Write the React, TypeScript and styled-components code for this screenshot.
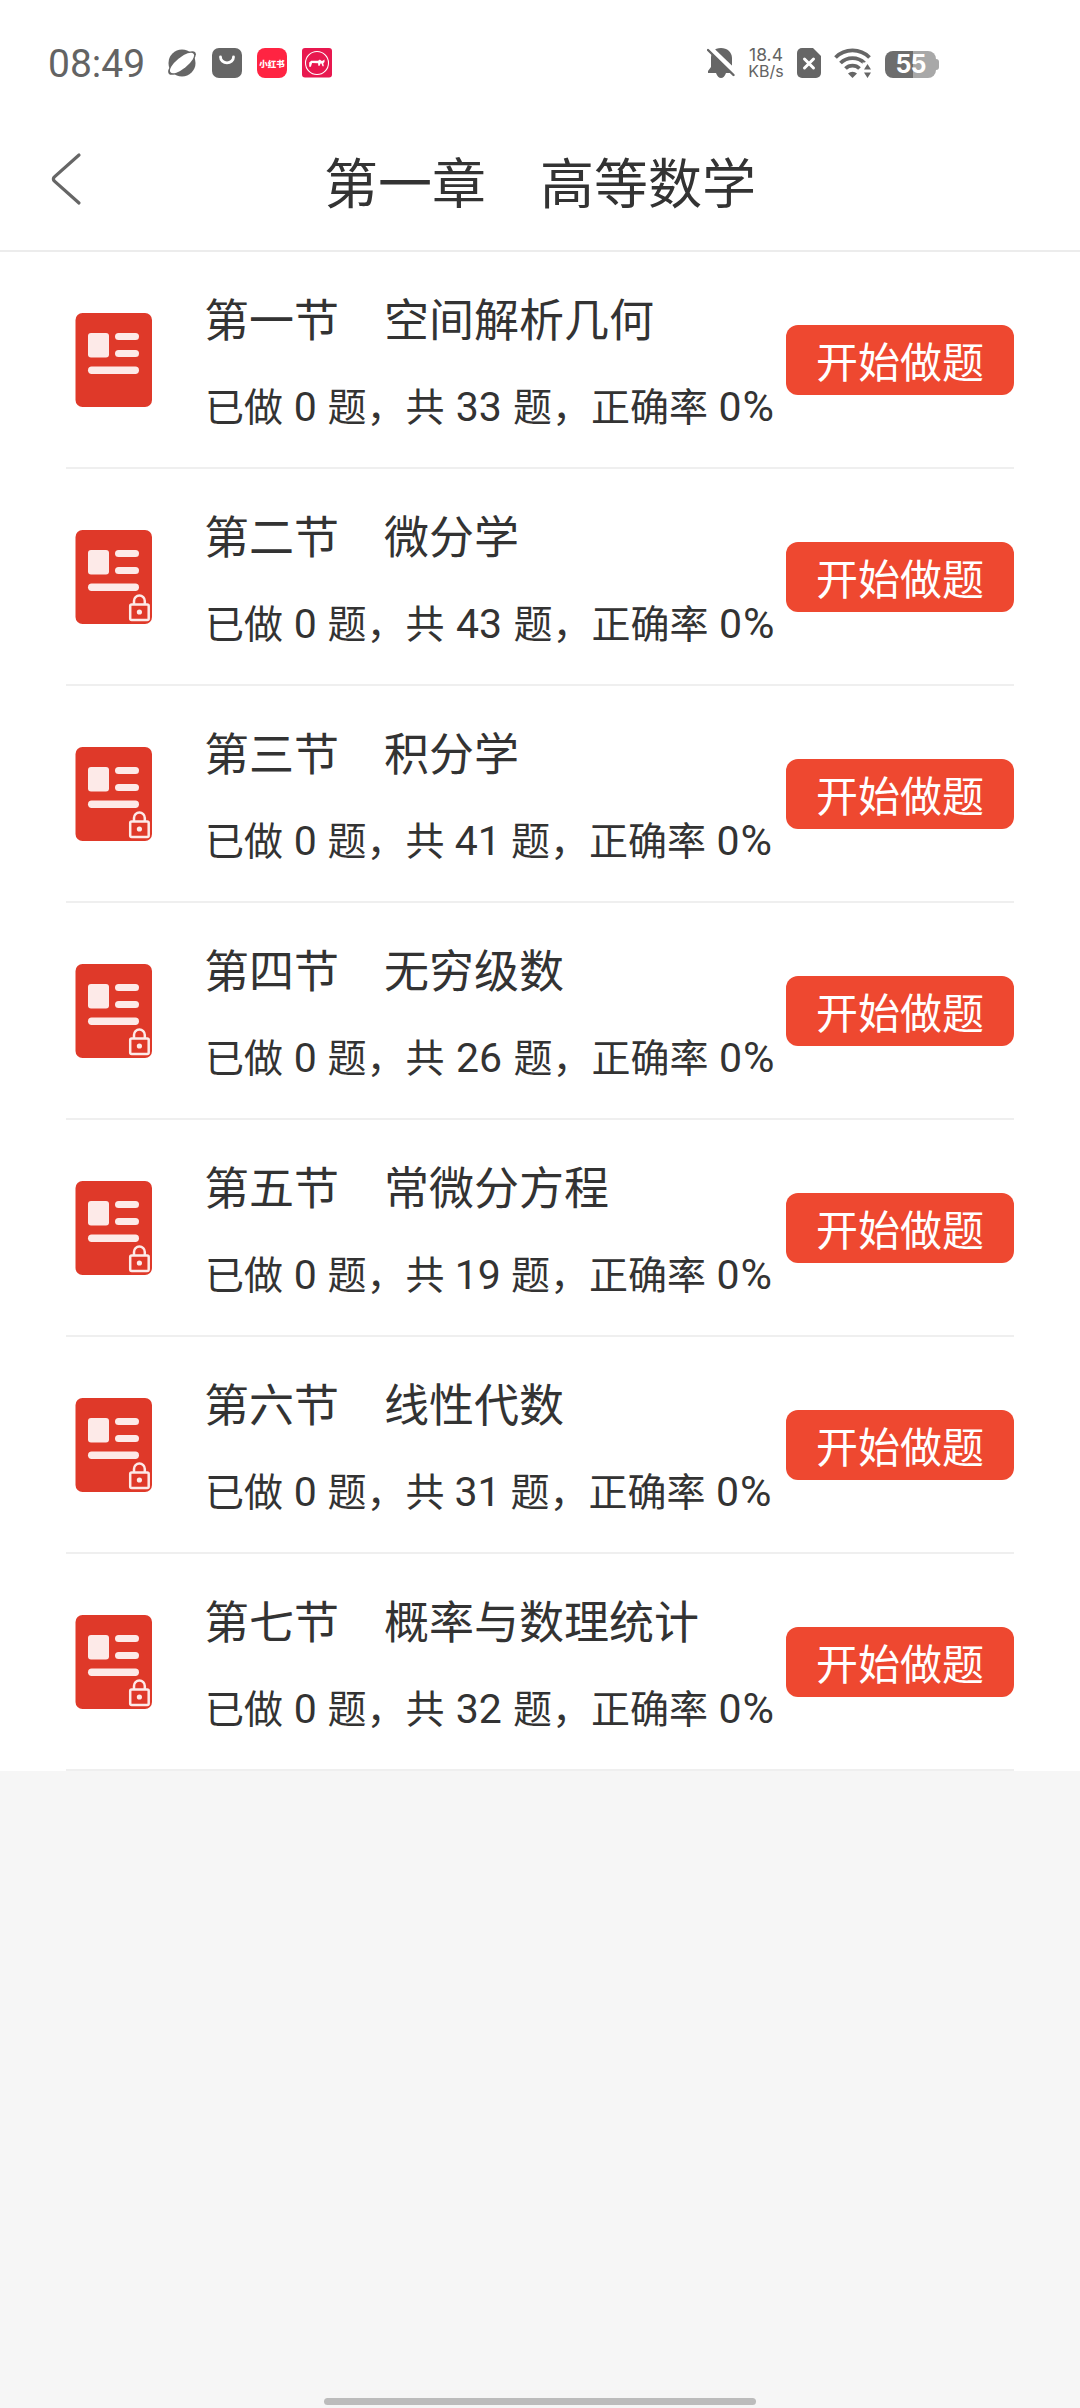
import React from "react";
import styled, { createGlobalStyle } from "styled-components";

const Global = createGlobalStyle`
  * { box-sizing: border-box; }
  body { margin: 0; background: #f6f6f6; font-family: "Noto Sans CJK SC", "Noto Sans", sans-serif; color: #333; }
`;

const Screen = styled.div`
  display: flex;
  flex-direction: column;
  height: 2408px;
  width: 1080px;
  background: #f6f6f6;
`;

const StatusBar = styled.div`
  display: flex;
  justify-content: space-between;
  align-items: center;
  height: 126px;
  padding: 0 141px 0 48px;
  background: #fff;
  color: #636363;
`;

const StatusGroup = styled.div<{ $gap: number }>`
  display: flex;
  align-items: center;
  gap: ${(p) => p.$gap}px;
`;

const Clock = styled.span`
  width: 104px;
  padding-top: 2px;
  font: 400 39px/46px Roboto, sans-serif;
  white-space: nowrap;
`;

const NetSpeed = styled.span`
  display: flex;
  flex-direction: column;
  align-items: center;
  width: 36px;
  font: 400 17.5px/16px Inter, sans-serif;
  white-space: nowrap;
`;

const NetUnit = styled.span`
  font-size: 16px;
`;

const RedApp = styled.span`
  display: flex;
  align-items: center;
  justify-content: center;
  width: 30px;
  height: 30px;
  border-radius: 8px;
  background: #ff2442;
  color: #fff;
  font: 900 8.5px/10px "Noto Sans CJK SC", sans-serif;
  white-space: nowrap;
`;

const Battery = styled.span`
  display: flex;
  align-items: center;
  margin-top: 3px;
`;

const BatteryBody = styled.span`
  display: flex;
  align-items: center;
  justify-content: center;
  width: 51px;
  height: 27px;
  border-radius: 8px;
  background: linear-gradient(90deg, #6d6d6d 55%, #a8a8a8 55%);
  color: #fff;
  font: 700 25px/27px Inter, sans-serif;
  letter-spacing: -1px;
`;

const BatteryTip = styled.span`
  width: 3px;
  height: 11px;
  border-radius: 0 3px 3px 0;
  background: #a8a8a8;
`;

const Header = styled.header`
  display: grid;
  grid-template-columns: 120px 1fr 120px;
  align-items: center;
  height: 126px;
  background: #fff;
  border-bottom: 2px solid #ececec;
`;

const BackButton = styled.button`
  display: flex;
  padding: 0 0 18px 50px;
  border: 0;
  background: none;
`;

const Title = styled.h1`
  margin: 0;
  padding-bottom: 14px;
  text-align: center;
  font-size: 54px;
  line-height: 76px;
  font-weight: 400;
  white-space: nowrap;
`;

const List = styled.main`
  padding: 0 66px;
  background: #fff;
`;

const Row = styled.section`
  display: flex;
  align-items: center;
  height: 217px;
  border-bottom: 2px solid #efefef;
`;

const BookSlot = styled.div`
  display: flex;
  width: 138px;
  padding-left: 9px;
`;

const Info = styled.div`
  display: flex;
  flex-direction: column;
  gap: 26px;
  width: 582px;
  padding-top: 5px;
`;

const SectionName = styled.h2`
  margin: 0;
  font-size: 45px;
  line-height: 60px;
  font-weight: 400;
  white-space: nowrap;
`;

const Stats = styled.p`
  display: flex;
  align-items: baseline;
  margin: 0;
  padding-left: 1px;
  font-size: 39px;
  line-height: 60px;
  white-space: nowrap;
`;

const Count = styled.span<{ $width: number }>`
  width: ${(p) => p.$width}px;
  text-align: center;
  font-family: Roboto, sans-serif;
  font-size: 41px;
`;

const Percent = styled.span`
  padding-left: 10.5px;
  font-family: Roboto, sans-serif;
  font-size: 41px;
  letter-spacing: 1px;
`;

const PercentSign = styled.span`
  font-size: 43px;
  line-height: 1;
`;

const StartButton = styled.button`
  width: 228px;
  height: 70px;
  padding: 1px 0 0;
  border: 0;
  border-radius: 12px;
  background: #ee4830;
  color: #fff;
  font: 400 42px/68px "Noto Sans CJK SC", sans-serif;
  white-space: nowrap;
`;

const Bottom = styled.footer`
  display: flex;
  flex: 1;
  align-items: flex-end;
  justify-content: center;
  padding-bottom: 3px;
`;

const HomeBar = styled.div`
  width: 432px;
  height: 7px;
  border-radius: 4px;
  background: #bcbcbc;
`;

const PlanetIcon = () => (
  <svg width="30" height="30" viewBox="0 0 30 30">
    <circle cx="15" cy="15" r="13.5" fill="#666" />
    <ellipse cx="15" cy="15" rx="17" ry="6.5" transform="rotate(-39 15 15)" fill="#666" />
    <ellipse cx="15" cy="15" rx="14.8" ry="5.6" transform="rotate(-39 15 15)" fill="#fff" />
  </svg>
);

const BagIcon = () => (
  <svg width="30" height="30" viewBox="0 0 30 30">
    <rect width="30" height="30" rx="7" fill="#666" />
    <path d="M8.500 9a6.500 5.800 0 0 0 13 0" fill="none" stroke="#fff" strokeWidth="2.8" strokeLinecap="round" />
  </svg>
);

const RoundAppIcon = () => (
  <svg width="30" height="30" viewBox="0 0 30 30">
    <rect width="30" height="29.500" rx="3" fill="#e8184f" />
    <circle cx="15" cy="15" r="11.500" fill="none" stroke="#fff" strokeWidth="1.1" />
    <path
      d="M7.200 14.500l2-1.700h7l1-1h1l1 1h1.500l1.800-1.400v2.600l-1.200 1.200 .5 3h-1.300l-1-2.800h-1l-.8 2.400h-1.400l-.2-2.600-6-.2-1.200 3.800H7.200z"
      fill="#fff"
    />
  </svg>
);

const MutedBellIcon = () => (
  <svg width="28" height="32" viewBox="0 0 28 32">
    <path d="M14 1C7 1 4 6 4 11v9l-3 4v2h8c1 3 3 5 5 5s4-2 5-5h6V11C25 5 20 1 14 1z" fill="#666" />
    <path d="M2 0l28 27" stroke="#fff" strokeWidth="5" />
    <path d="M1 3l25.500 25" stroke="#666" strokeWidth="2.400" strokeLinecap="round" />
  </svg>
);

const SimIcon = () => (
  <svg width="24" height="30" viewBox="0 0 24 30">
    <path d="M5 0h11l8 8v17a5 5 0 0 1-5 5H5a5 5 0 0 1-5-5V5a5 5 0 0 1 5-5z" fill="#666" />
    <path d="M7.500 11l9 9M16.500 11l-9 9" stroke="#fff" strokeWidth="3" strokeLinecap="round" />
  </svg>
);

const WifiIcon = () => (
  <svg width="38" height="30" viewBox="0 0 38 30">
    <g fill="none" stroke="#666" strokeWidth="3.800">
      <path d="M1.500 9.500a24 24 0 0 1 34 0" />
      <path d="M6.500 15a17 17 0 0 1 24 0" />
      <path d="M11.500 20.500a10 10 0 0 1 14 0" />
    </g>
    <path d="M14 25.500a6.500 6.500 0 0 1 9 0l-4.500 4.500z" fill="#666" />
    <path d="M28.500 14.500h9.500V30h-9.500z" fill="#fff" />
    <path d="M33.500 16l3.500 5.500h-7zM33.500 30l3.500-5.500h-7z" fill="#666" />
  </svg>
);

const BackIcon = () => (
  <svg width="32" height="54" viewBox="0 0 32 54">
    <path d="M29 3L4.200 25q-1.600 2 0 4L29 51" fill="none" stroke="#666" strokeWidth="3.2" strokeLinecap="round" />
  </svg>
);

const BookIcon = ({ locked }: { locked: boolean }) => (
  <svg width="78" height="96" viewBox="0 0 78 96">
    <rect x="0.500" y="1" width="76.500" height="94" rx="7" fill="#df3929" />
    <g fill="#fdeae8">
      <rect x="13" y="21" width="21" height="24.500" rx="3" />
      <rect x="40" y="21" width="24" height="7" rx="3.500" />
      <rect x="40" y="38" width="24" height="7" rx="3.500" />
      <rect x="13" y="54.500" width="51" height="7.500" rx="3.700" />
    </g>
    {locked && (
      <g fill="none" stroke="#fdeae8" strokeWidth="2.500">
        <rect x="55.200" y="75.500" width="18.500" height="15.500" rx="1.500" />
        <path d="M59 75v-3a5.400 5.400 0 0 1 10.800 0V75" />
        <circle cx="64.400" cy="83" r="2.600" fill="#fdeae8" stroke="none" />
      </g>
    )}
  </svg>
);

const sections = [
  { name: "第一节　空间解析几何", total: 33, locked: false, slot: 68.5 },
  { name: "第二节　微分学", total: 43, locked: true, slot: 69 },
  { name: "第三节　积分学", total: 41, locked: true, slot: 66.5 },
  { name: "第四节　无穷级数", total: 26, locked: true, slot: 69 },
  { name: "第五节　常微分方程", total: 19, locked: true, slot: 66.5 },
  { name: "第六节　线性代数", total: 31, locked: true, slot: 66 },
  { name: "第七节　概率与数理统计", total: 32, locked: true, slot: 68.5 },
];

export default function App() {
  return (
    <Screen>
      <Global />
      <StatusBar>
        <StatusGroup $gap={15}>
          <Clock>08:49</Clock>
          <PlanetIcon />
          <BagIcon />
          <RedApp>小红书</RedApp>
          <RoundAppIcon />
        </StatusGroup>
        <StatusGroup $gap={13}>
          <MutedBellIcon />
          <NetSpeed>
            <span>18.4</span>
            <NetUnit>KB/s</NetUnit>
          </NetSpeed>
          <SimIcon />
          <WifiIcon />
          <Battery>
            <BatteryBody>55</BatteryBody>
            <BatteryTip />
          </Battery>
        </StatusGroup>
      </StatusBar>
      <Header>
        <BackButton aria-label="返回">
          <BackIcon />
        </BackButton>
        <Title>第一章　高等数学</Title>
      </Header>
      <List>
        {sections.map((s) => (
          <Row key={s.name}>
            <BookSlot>
              <BookIcon locked={s.locked} />
            </BookSlot>
            <Info>
              <SectionName>{s.name}</SectionName>
              <Stats>
                <span>已做</span>
                <Count $width={44.5}>0</Count>
                <span>题，共</span>
                <Count $width={s.slot}>{s.total}</Count>
                <span>题，正确率</span>
                <Percent>
                  0<PercentSign>%</PercentSign>
                </Percent>
              </Stats>
            </Info>
            <StartButton>开始做题</StartButton>
          </Row>
        ))}
      </List>
      <Bottom>
        <HomeBar />
      </Bottom>
    </Screen>
  );
}
